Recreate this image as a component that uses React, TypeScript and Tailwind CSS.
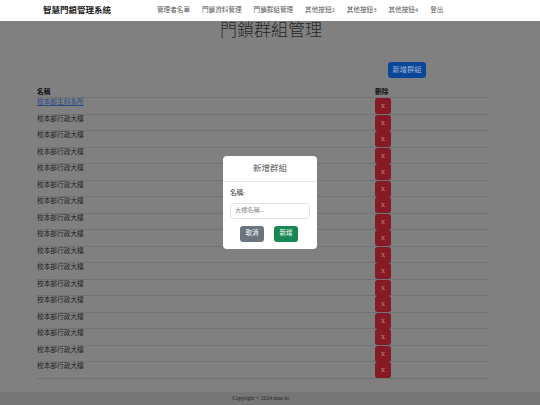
import React from 'react';

const navItems = ['管理者名單', '門鎖資料管理', '門鎖群組管理', '其他按鈕2', '其他按鈕3', '其他按鈕4', '登出'];

const groups = [
  { name: '校本部生科系所', link: true },
  ...Array.from({ length: 16 }, () => ({ name: '校本部行政大樓', link: false })),
];

const App: React.FC = () => {
  return (
    <div className="min-h-screen flex flex-col bg-[#808080] font-['Liberation_Serif','Noto_Sans_CJK_TC',serif] text-[#1b1b1b]">
      {/* Navbar */}
      <nav className="h-[21px] bg-white flex items-center">
        <span className="pl-[43px] text-[8.5px] font-bold text-[#222] leading-none">智慧門鎖管理系統</span>
        <div className="ml-[46px] flex items-center gap-[12px]">
          {navItems.map((item) => (
            <span key={item} className="text-[6.6px] text-[#5a5a5a] leading-none">
              {item}
            </span>
          ))}
        </div>
      </nav>

      <main className="flex-1">
        <h1 className="text-center text-[17px] leading-[20px] font-light text-[#262626] pl-[2px]">門鎖群組管理</h1>

        <div className="mt-[21px] flex">
          <button className="ml-[388px] w-[38px] h-[16px] rounded-[3px] bg-[#0a4799] text-[7.2px] text-[#9fb3d4]">
            新增群組
          </button>
        </div>

        {/* Group table */}
        <div className="mt-[9px] ml-[37px] w-[452px]">
          <div className="grid grid-cols-[338px_1fr] h-[11px] items-center pt-[1px] border-b border-[#727375] text-[6.7px] font-bold text-[#111] leading-none">
            <span>名稱</span>
            <span>刪除</span>
          </div>
          {groups.map((g, i) => (
            <div key={i} className="grid grid-cols-[338px_1fr] h-[16.5px] border-b border-[#727375] text-[6.7px] leading-[8px]">
              {g.link ? (
                <a className="text-[#2a4a8a] underline">{g.name}</a>
              ) : (
                <span className="text-[#222]">{g.name}</span>
              )}
              <button className="w-[16px] h-[16px] rounded-[2.5px] bg-[#861b26] text-[6px] text-[#c79298] leading-none">
                X
              </button>
            </div>
          ))}
        </div>
      </main>

      <footer className="h-[13px] bg-[#767676] flex items-center justify-center pr-[18px]">
        <span className="text-[5.4px] text-[#222] leading-none">Copyright © 2024 ntnu itc</span>
      </footer>

      {/* Modal */}
      <div className="fixed inset-0 flex items-center justify-center">
        <div className="w-[94px] h-[93px] bg-white rounded-[4px] flex flex-col">
          <div className="h-[26px] border-b border-[#e4e6e9] flex items-center justify-center">
            <span className="text-[8.5px] text-[#555] leading-none">新增群組</span>
          </div>
          <div className="px-[7px] pt-[8px]">
            <div className="text-[6.5px] text-[#333] leading-none">名稱:</div>
            <div className="mt-[6px] h-[16px] w-[80px] border border-[#e2e5e8] rounded-[3px] flex items-center pl-[4px]">
              <span className="text-[6.2px] text-[#888] leading-none">大樓名稱...</span>
            </div>
            <div className="mt-[7px] flex justify-center gap-[10px] pr-[2px]">
              <button className="w-[24px] h-[16px] rounded-[3px] bg-[#6c757d] text-[6.5px] text-white leading-none">取消</button>
              <button className="w-[24px] h-[16px] rounded-[3px] bg-[#198754] text-[6.5px] text-white leading-none">新增</button>
            </div>
          </div>
        </div>
      </div>
    </div>
  );
};

export default App;
